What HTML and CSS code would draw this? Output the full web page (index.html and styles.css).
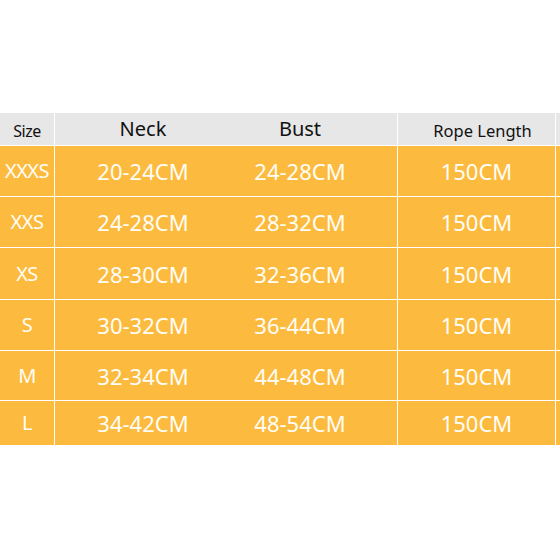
FILE: index.html
```html
<!DOCTYPE html>
<html>
<head>
<meta charset="utf-8">
<link rel="stylesheet" href="styles.css">
</head>
<body>
<div class="page">
  <div class="chart">
    <div class="row head">
      <div class="cell c-size"><span class="h-size">Size</span></div>
      <div class="cell c-neck"><span class="h-big">Neck</span></div>
      <div class="cell c-bust"><span class="h-big">Bust</span></div>
      <div class="cell c-rope"><span class="h-rope">Rope Length</span></div>
      <div class="cell c-end"></div>
    </div>
    <div class="row r50">
      <div class="cell c-size">XXXS</div>
      <div class="cell c-neck">20-24CM</div>
      <div class="cell c-bust">24-28CM</div>
      <div class="cell c-rope">150CM</div>
      <div class="cell c-end"></div>
    </div>
    <div class="row r50">
      <div class="cell c-size">XXS</div>
      <div class="cell c-neck">24-28CM</div>
      <div class="cell c-bust">28-32CM</div>
      <div class="cell c-rope">150CM</div>
      <div class="cell c-end"></div>
    </div>
    <div class="row r51">
      <div class="cell c-size">XS</div>
      <div class="cell c-neck">28-30CM</div>
      <div class="cell c-bust">32-36CM</div>
      <div class="cell c-rope">150CM</div>
      <div class="cell c-end"></div>
    </div>
    <div class="row r50">
      <div class="cell c-size">S</div>
      <div class="cell c-neck">30-32CM</div>
      <div class="cell c-bust">36-44CM</div>
      <div class="cell c-rope">150CM</div>
      <div class="cell c-end"></div>
    </div>
    <div class="row r49">
      <div class="cell c-size">M</div>
      <div class="cell c-neck">32-34CM</div>
      <div class="cell c-bust">44-48CM</div>
      <div class="cell c-rope">150CM</div>
      <div class="cell c-end"></div>
    </div>
    <div class="row r44 last">
      <div class="cell c-size">L</div>
      <div class="cell c-neck">34-42CM</div>
      <div class="cell c-bust">48-54CM</div>
      <div class="cell c-rope">150CM</div>
      <div class="cell c-end"></div>
    </div>
  </div>
</div>
</body>
</html>
```

FILE: styles.css
```css
html, body {
  margin: 0;
  padding: 0;
  background: #ffffff;
}

.page {
  width: 560px;
  height: 560px;
  padding-top: 113px;
  box-sizing: border-box;
  font-family: "Noto Sans", "Open Sans", sans-serif;
}

.chart {
  display: flex;
  flex-direction: column;
  width: 560px;
}

.row {
  display: flex;
  background: #fcbb3e;
  color: #fffdf6;
  border-bottom: 1px solid #ffffff;
  box-sizing: content-box;
}

.row.last {
  border-bottom: none;
}

.row.head {
  height: 32px;
  background: #e7e7e7;
  color: #111111;
}

.r50 { height: 50px; }
.r51 { height: 51px; }
.r49 { height: 49px; }
.r44 { height: 44px; }

.cell {
  display: flex;
  align-items: center;
  justify-content: center;
  font-size: 22px;
  line-height: 1;
  white-space: nowrap;
  box-sizing: border-box;
}

.head .cell {
  align-items: flex-end;
  padding-bottom: 6px;
}

.c-size {
  width: 54px;
  border-right: 1px solid #ffffff;
  font-size: 20px;
  overflow: visible;
  letter-spacing: -0.5px;
  flex: none;
  width: 55px;
}

.c-neck {
  width: 174px;
  flex: none;
  padding-left: 2px;
}

.c-bust {
  width: 169px;
  flex: none;
  padding-right: 26px;
  border-right: 1px solid #ffffff;
}

.c-rope {
  width: 158px;
  flex: none;
  border-right: 1px solid #ffffff;
}

.c-end {
  flex: 1;
}

.h-size {
  font-size: 16px;
}

.h-big {
  font-size: 20px;
}

.h-rope {
  font-size: 16.5px;
  padding-left: 12px;
}
```
